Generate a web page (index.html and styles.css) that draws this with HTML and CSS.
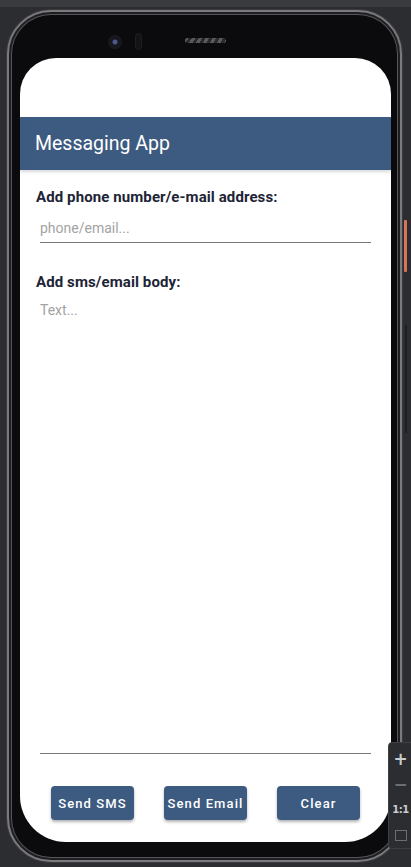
FILE: index.html
```html
<!DOCTYPE html>
<html>
<head>
<meta charset="utf-8">
<link rel="stylesheet" href="styles.css">
</head>
<body>
<div class="topstrip"></div>
<div class="stage">
  <div class="phone">
    <div class="camera"></div>
    <div class="sensor"></div>
    <div class="speaker"></div>
    <div class="screen">
      <div class="statusbar"></div>
      <div class="appbar">Messaging App</div>
      <div class="content">
        <div class="label">Add phone number/e-mail address:</div>
        <div class="input"><span class="placeholder">phone/email...</span></div>
        <div class="label label-body">Add sms/email body:</div>
        <div class="textarea"><span class="placeholder">Text...</span></div>
        <div class="actions">
          <button class="btn">Send SMS</button>
          <button class="btn">Send Email</button>
          <button class="btn">Clear</button>
        </div>
      </div>
    </div>
  </div>
  <div class="power"></div>
  <div class="volume"></div>
  <div class="zoombar">
    <div class="zb-item zb-plus">+</div>
    <div class="zb-item zb-minus">&minus;</div>
    <div class="zb-item zb-one">1:1</div>
    <div class="zb-item"><span class="zb-fit"></span></div>
  </div>
</div>
</body>
</html>
```

FILE: styles.css
```css
* { box-sizing: border-box; }
html, body {
  margin: 0;
  padding: 0;
  width: 411px;
  height: 867px;
  overflow: hidden;
  background: #2b2d30;
  font-family: Roboto, "Noto Sans", sans-serif;
}
.topstrip {
  height: 7px;
  background: #393b3e;
}
.stage {
  position: relative;
  height: 860px;
}
.phone {
  position: relative;
  margin: 3px 0 0 7px;
  width: 395px;
  height: 852px;
  border-radius: 44px;
  background: #0b0b0d;
  border: 2px solid #7a7a7e;
  box-shadow: inset 0 0 0 2px #1e1e21, inset 0 0 0 3px #55555a, 0 0 0 1px #3a3a3d;
  padding: 46px 9px 0 11px;
}
.camera {
  position: absolute;
  left: 99px;
  top: 23px;
  width: 14px;
  height: 14px;
  border-radius: 50%;
  background: radial-gradient(circle at 50% 50%, #4a5a8a 0 2px, #15161c 3px, #1b1c21 100%);
}
.sensor {
  position: absolute;
  left: 126px;
  top: 21px;
  width: 7px;
  height: 17px;
  border-radius: 4px;
  background: #141417;
  border: 1px solid #1f1f23;
}
.speaker {
  position: absolute;
  left: 176px;
  top: 26px;
  width: 41px;
  height: 5px;
  border-radius: 3px;
  background: repeating-linear-gradient(120deg, #5a5a5e 0 3px, #2a2a2e 3px 6px);
}
.screen {
  width: 371px;
  height: 784px;
  background: #ffffff;
  border-radius: 36px 36px 46px 46px;
  overflow: hidden;
  display: flex;
  flex-direction: column;
}
.statusbar {
  height: 59px;
  flex: none;
}
.appbar {
  height: 53px;
  flex: none;
  background: #3d5a80;
  color: #ffffff;
  font-size: 19.5px;
  line-height: 54px;
  padding-left: 15px;
  box-shadow: 0 2px 3px rgba(0,0,0,0.15);
  position: relative;
  z-index: 1;
}
.content {
  flex: 1;
  display: flex;
  flex-direction: column;
  padding: 17px 20px 22px 16px;
}
.label {
  font-size: 15px;
  font-weight: 700;
  color: #1d2436;
  line-height: 20px;
  letter-spacing: 0.1px;
}
.label-body {
  margin-top: 29px;
}
.input {
  margin: 9px 0 0 4px;
  height: 27px;
  border-bottom: 1px solid #7a7a7a;
  font-size: 14px;
  line-height: 24px;
}
.placeholder {
  color: #a3a3a3;
}
.textarea {
  flex: 1;
  margin: 10px 0 0 4px;
  border-bottom: 1px solid #7a7a7a;
  font-size: 14px;
  line-height: 16px;
}
.actions {
  display: flex;
  justify-content: center;
  gap: 30px;
  margin: 32px -20px 0 -16px;
}
.btn {
  width: 83px;
  height: 34px;
  border: none;
  border-radius: 4px;
  background: #3d5a80;
  color: #ffffff;
  font-family: Roboto, "Noto Sans", sans-serif;
  font-size: 13px;
  font-weight: 500;
  letter-spacing: 1.1px;
  padding: 0;
  box-shadow: 0 2px 3px rgba(0,0,0,0.3);
}
.power {
  position: absolute;
  left: 404px;
  top: 210px;
  width: 3px;
  height: 52px;
  background: #d9735a;
  border-radius: 1px;
}
.volume {
  position: absolute;
  left: 405px;
  top: 315px;
  width: 2px;
  height: 108px;
  background: #1d1e21;
}
.zoombar {
  position: absolute;
  left: 388px;
  top: 732px;
  width: 30px;
  height: 107px;
  background: #2b2d30;
  border: 1px solid #3e4044;
  border-radius: 4px 0 0 4px;
  display: flex;
  flex-direction: column;
  padding-top: 3px;
}
.zb-item {
  height: 26px;
  width: 23px;
  display: flex;
  align-items: center;
  justify-content: center;
  color: #c9ccd0;
  font-family: "DejaVu Sans", sans-serif;
  font-weight: 700;
}
.zb-plus { font-size: 17px; }
.zb-minus { font-size: 17px; color: #6b6e73; }
.zb-one { font-size: 10px; letter-spacing: -0.5px; }
.zb-fit {
  width: 12px;
  height: 11px;
  border: 1px solid #6b6e73;
  display: block;
}
```
